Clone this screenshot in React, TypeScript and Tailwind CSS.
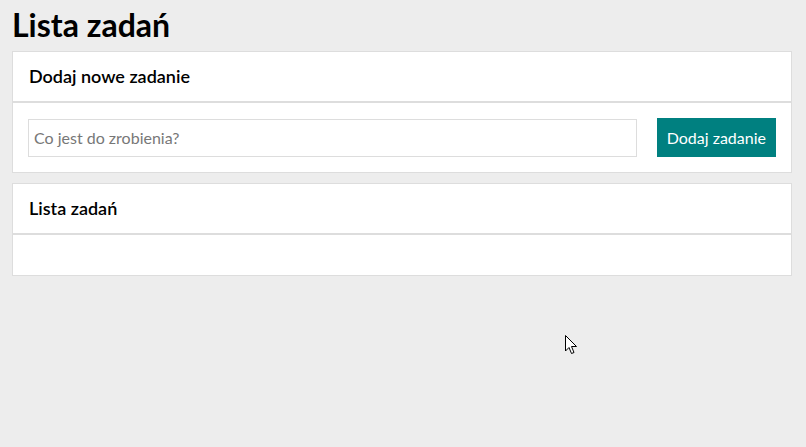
import type { ReactNode } from "react";

function Card({ title, children }: { title: string; children: ReactNode }) {
  return (
    <section className="border border-[#dddddd] bg-white">
      <div className="flex h-[51px] items-center border-b-2 border-[#dddddd] px-4">
        <h2 className="text-[18px] font-semibold text-black">{title}</h2>
      </div>
      {children}
    </section>
  );
}

export default function App() {
  return (
    <div className="relative min-h-[447px] bg-[#ededed] pl-3 pr-[14px] font-['Lato',sans-serif]">
      <h1 className="pt-[3px] text-[32px] font-bold leading-[44px] text-black">Lista zadań</h1>
      <div className="mt-[4px] grid gap-[10px]">
        <Card title="Dodaj nowe zadanie">
          <form className="flex items-center gap-5 px-[15px] py-[15px]" onSubmit={(e) => e.preventDefault()}>
            <input
              type="text"
              placeholder="Co jest do zrobienia?"
              className="h-[38px] flex-1 border border-[#dddddd] px-[5px] text-[16px] text-black outline-none placeholder:text-[#777777]"
            />
            <button type="submit" className="h-[39px] bg-[#008080] px-[10px] text-[16px] text-white">
              Dodaj zadanie
            </button>
          </form>
        </Card>
        <Card title="Lista zadań">
          <ul className="h-[40px]" />
        </Card>
      </div>
      <svg className="absolute left-[565px] top-[335px]" width="13" height="20" viewBox="0 0 13 20" aria-hidden="true">
        <path d="M0.5 0.5 L0.5 16 L4 12.5 L6.5 18.5 L9 17.5 L6.5 11.5 L11.5 11.5 Z" fill="white" stroke="black" strokeWidth="1" />
      </svg>
    </div>
  );
}
